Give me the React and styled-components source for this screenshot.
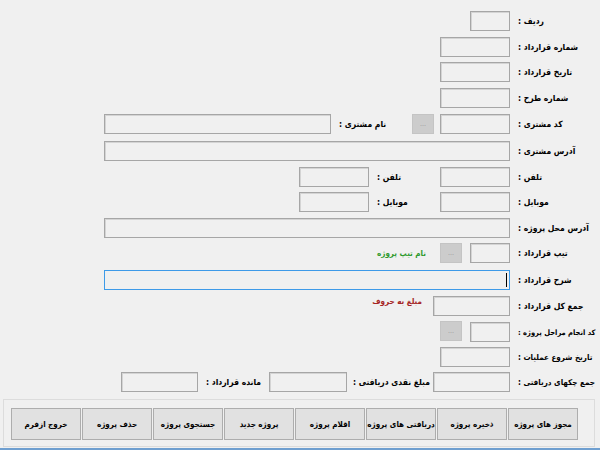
import React from "react";
import styled, { createGlobalStyle } from "styled-components";

const GlobalStyle = createGlobalStyle`
  html, body { margin: 0; padding: 0; background: #f0f0f0; }
  body { font-family: "DejaVu Sans Condensed", "DejaVu Sans", sans-serif; }
`;

const Page = styled.div`
  width: 600px;
  height: 450px;
  display: flex;
  flex-direction: column;
  overflow: hidden;
  background: #f0f0f0;
`;

const Form = styled.div`
  display: flex;
  flex-direction: column;
  padding-top: 11px;
`;

const Row = styled.div`
  direction: rtl;
  display: flex;
  align-items: center;
  height: 20px;
  margin-top: ${(p) => p.$top || 0}px;
`;

// colon side of the caption stays anchored on the left, like the WinForms labels
const Caption = styled.div`
  width: ${(p) => p.$w || 82}px;
  flex-shrink: 0;
  display: flex;
  justify-content: flex-end;
  font-size: ${(p) => p.$size || 8.5}px;
  font-weight: bold;
  color: #000;
  white-space: nowrap;
`;

const Note = styled.div`
  margin-inline-start: ${(p) => p.$gap || 0}px;
  align-self: ${(p) => (p.$top ? "flex-start" : "center")};
  margin-top: ${(p) => (p.$top ? 1 : 0)}px;
  font-size: 8px;
  font-weight: bold;
  color: ${(p) => p.$color};
  white-space: nowrap;
`;

const TextBox = styled.div`
  box-sizing: border-box;
  width: ${(p) => p.$w}px;
  height: 20px;
  flex-shrink: 0;
  margin-inline-start: ${(p) => p.$gap || 0}px;
  background: #f0f0f0;
  border: 1px solid ${(p) => (p.$focus ? "#3d9ae8" : "#a6a6a6")};
  box-shadow: ${(p) => (p.$focus ? "none" : "inset 1px 1px 0 #d4d4d4")};
  display: flex;
  align-items: center;
`;

const Caret = styled.span`
  width: 1px;
  height: 14px;
  margin-right: 2px;
  background: #000;
`;

const DotsButton = styled.div`
  box-sizing: border-box;
  width: 22px;
  height: 20px;
  flex-shrink: 0;
  margin-inline-start: ${(p) => p.$gap || 0}px;
  margin-top: ${(p) => (p.$lift ? -3 : 0)}px;
  background: #cccccc;
  border: 1px solid #c4c4c4;
  color: #9a9a9a;
  font-size: 7px;
  display: flex;
  align-items: center;
  justify-content: center;
`;

const ButtonPanel = styled.div`
  box-sizing: border-box;
  direction: rtl;
  width: 592px;
  height: 48px;
  margin: 7px 0 0 3px;
  padding: 8px 16px 0 0;
  border: 1px solid #dcdcdc;
  display: flex;
  gap: 1px;
`;

const FormButton = styled.div`
  box-sizing: border-box;
  width: 70px;
  height: 32px;
  flex-shrink: 0;
  background: #e1e1e1;
  border: 1px solid #adadad;
  font-size: 8px;
  font-weight: bold;
  color: #000;
  display: flex;
  align-items: center;
  justify-content: center;
  white-space: nowrap;
`;

const Strip = styled.div`
  height: 2px;
  margin-top: 1px;
  background: #6f9fd0;
`;

const buttons = [
  "مجوز های پروژه",
  "ذخیره پروژه",
  "دریافتی های پروژه",
  "اقلام پروژه",
  "پروژه جدید",
  "جستجوی پروژه",
  "حذف پروژه",
  "خروج ازفرم",
];

export default function App() {
  return (
    <Page>
      <GlobalStyle />
      <Form>
        <Row>
          <Caption>ردیف :</Caption>
          <TextBox $w={40} $gap={8} />
        </Row>
        <Row $top={6}>
          <Caption>شماره قرارداد :</Caption>
          <TextBox $w={70} $gap={8} />
        </Row>
        <Row $top={5}>
          <Caption>تاریخ قرارداد :</Caption>
          <TextBox $w={70} $gap={8} />
        </Row>
        <Row $top={6}>
          <Caption>شماره طرح :</Caption>
          <TextBox $w={70} $gap={8} />
        </Row>
        <Row $top={6}>
          <Caption>کد مشتری :</Caption>
          <TextBox $w={70} $gap={8} />
          <DotsButton $gap={6}>...</DotsButton>
          <Caption $w={73}>نام مشتری :</Caption>
          <TextBox $w={227} $gap={8} />
        </Row>
        <Row $top={7}>
          <Caption>آدرس مشتری :</Caption>
          <TextBox $w={406} $gap={8} />
        </Row>
        <Row $top={6}>
          <Caption>تلفن :</Caption>
          <TextBox $w={70} $gap={8} />
          <Caption $w={63}>تلفن :</Caption>
          <TextBox $w={70} $gap={8} />
        </Row>
        <Row $top={5}>
          <Caption>موبایل :</Caption>
          <TextBox $w={70} $gap={8} />
          <Caption $w={63}>موبایل :</Caption>
          <TextBox $w={70} $gap={8} />
        </Row>
        <Row $top={6}>
          <Caption>آدرس محل پروژه :</Caption>
          <TextBox $w={406} $gap={8} />
        </Row>
        <Row $top={5}>
          <Caption>تیپ قرارداد :</Caption>
          <TextBox $w={40} $gap={8} />
          <DotsButton $gap={8}>...</DotsButton>
          <Note $gap={14} $color="#2e9a2e">نام تیپ پروژه</Note>
        </Row>
        <Row $top={7}>
          <Caption>شرح قرارداد :</Caption>
          <TextBox $w={406} $gap={8} $focus>
            <Caret />
          </TextBox>
        </Row>
        <Row $top={6}>
          <Caption>جمع کل قرارداد :</Caption>
          <TextBox $w={77} $gap={8} />
          <Note $gap={11} $top $color="#a52424">مبلغ به حروف</Note>
        </Row>
        <Row $top={6}>
          <Caption $size={7.5}>کد انجام مراحل پروژه :</Caption>
          <TextBox $w={40} $gap={8} />
          <DotsButton $gap={8} $lift>...</DotsButton>
        </Row>
        <Row $top={5}>
          <Caption $size={8}>تاریخ شروع عملیات :</Caption>
          <TextBox $w={70} $gap={8} />
        </Row>
        <Row $top={5}>
          <Caption $size={8}>جمع چکهای دریافتی :</Caption>
          <TextBox $w={77} $gap={8} />
          <Caption $w={80}>مبلغ نقدی دریافتی :</Caption>
          <TextBox $w={78} $gap={6} />
          <Caption $w={63}>مانده قرارداد :</Caption>
          <TextBox $w={77} $gap={8} />
        </Row>
      </Form>
      <ButtonPanel>
        {buttons.map((b) => (
          <FormButton key={b}>{b}</FormButton>
        ))}
      </ButtonPanel>
      <Strip />
    </Page>
  );
}
